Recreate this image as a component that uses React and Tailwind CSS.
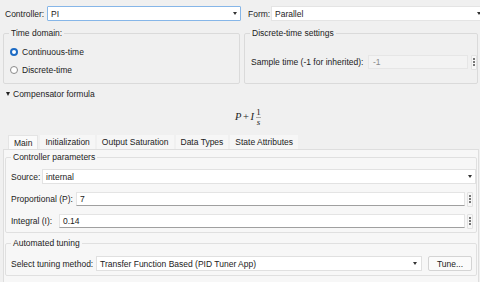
const Arrow = () => (
  <span className="inline-block w-0 h-0 border-l-[2.5px] border-r-[2.5px] border-t-[3px] border-l-transparent border-r-transparent border-t-[#333]" />
);

const Dots = () => (
  <div className="flex flex-col items-center justify-center gap-[1.5px] w-[6px] h-[15px] bg-[#f7f7f7] border border-[#e2e2e2] rounded-[1px] shrink-0">
    <span className="block w-[1.5px] h-[1.5px] bg-[#777]" />
    <span className="block w-[1.5px] h-[1.5px] bg-[#777]" />
    <span className="block w-[1.5px] h-[1.5px] bg-[#777]" />
  </div>
);

const Legend = ({ children }) => (
  <legend className="ml-[5px] px-[2px] leading-[10px] text-[#222]">{children}</legend>
);

const Tab = ({ children, active }) => (
  <div
    className={
      "h-[14px] px-[5px] flex items-center leading-[10px] " +
      (active ? "bg-[#fafafa] border-t border-l border-r border-[#e4e4e4]" : "bg-[#f6f6f6]")
    }
  >
    {children}
  </div>
);

export default function App() {
  return (
    <div className="w-[480px] h-[282px] overflow-hidden bg-[#f0f0f0] text-[#222] text-[8.5px] leading-[10px] font-['Liberation_Sans',Arial,sans-serif] flex flex-col">
      {/* Row 1 */}
      <div className="flex items-center mt-[6px] h-[15px]">
        <span className="ml-[5px] w-[42px]">Controller:</span>
        <div className="w-[194px] h-[15px] bg-white border border-[#86b6e8] rounded-[1px] flex items-center pl-[3px] pr-[3px]">
          <span className="flex-1">PI</span>
          <Arrow />
        </div>
        <span className="ml-[7px] w-[23px]">Form:</span>
        <div className="flex-1 h-[15px] bg-white border border-[#e4e4e4] flex items-center pl-[3px] mr-[-2px]">
          <span className="flex-1">Parallel</span>
          <Arrow />
        </div>
      </div>

      {/* Groups */}
      <div className="flex mt-[7px] pl-[3px] pr-[2px] gap-[4px] h-[56px]">
        <fieldset className="w-[237px] h-[56px] border border-[#dadada] rounded-[2px]">
          <Legend>Time domain:</Legend>
          <div className="flex flex-col mt-[8px] gap-[6px] pl-[6px]">
            <div className="flex items-center h-[12px]">
              <span className="w-[8px] h-[8px] rounded-full border-[2px] border-[#1d6bc4] bg-white" />
              <span className="ml-[4px]">Continuous-time</span>
            </div>
            <div className="flex items-center h-[12px]">
              <span className="w-[8px] h-[8px] rounded-full border border-[#8a8a8a] bg-white" />
              <span className="ml-[4px]">Discrete-time</span>
            </div>
          </div>
        </fieldset>
        <fieldset className="flex-1 h-[56px] border border-[#dadada] rounded-[2px]">
          <Legend>Discrete-time settings</Legend>
          <div className="flex items-center mt-[17px] pl-[6px] h-[14px]">
            <span className="w-[117px]">Sample time (-1 for inherited):</span>
            <div className="w-[100px] h-[14px] bg-[#f3f3f3] border border-[#e6e6e6] flex items-center pl-[4px] text-[#8a8a8a]">
              -1
            </div>
            <div className="ml-[3px]">
              <Dots />
            </div>
          </div>
        </fieldset>
      </div>

      {/* Compensator formula */}
      <div className="flex items-center mt-[5px] h-[10px] pl-[6px]">
        <span className="inline-block w-0 h-0 border-l-[2.5px] border-r-[2.5px] border-t-[4px] border-l-transparent border-r-transparent border-t-[#222]" />
        <span className="ml-[3px]">Compensator formula</span>
      </div>

      {/* Formula */}
      <div className="h-[36px] flex items-center justify-center pl-[16px] font-['Liberation_Serif',serif] italic text-[10.5px] text-[#222]">
        <span>P</span>
        <span className="not-italic mx-[1.5px]">+</span>
        <span>I</span>
        <span className="inline-flex flex-col items-center ml-[2px] text-[9px]">
          <span className="not-italic leading-[10px]">1</span>
          <span className="w-[5px] h-[0.5px] bg-[#aaa]" />
          <span className="leading-[10px]">s</span>
        </span>
      </div>

      {/* Tabs */}
      <div className="flex pl-[8px] gap-[2px] h-[14px]">
        <Tab active>Main</Tab>
        <Tab>Initialization</Tab>
        <Tab>Output Saturation</Tab>
        <Tab>Data Types</Tab>
        <Tab>State Attributes</Tab>
      </div>

      {/* Panel */}
      <div className="flex-1 ml-[3px] mr-[1px] border-t border-l border-r border-[#dedede] bg-[#f7f7f7] flex flex-col">
        <fieldset className="mx-[1px] mt-[2px] h-[81px] border border-[#e0e0e0] rounded-[2px]">
          <Legend>Controller parameters</Legend>
          <div className="flex items-center mt-[7px] h-[15px] pl-[5px]">
            <span className="w-[31px]">Source:</span>
            <div className="flex-1 h-[15px] bg-white border border-[#e2e2e2] flex items-center pl-[3px] pr-[3px]">
              <span className="flex-1">internal</span>
              <Arrow />
            </div>
          </div>
          <div className="flex items-center mt-[8px] h-[14px] pl-[5px] pr-[3px]">
            <span className="w-[65px]">Proportional (P):</span>
            <div className="flex-1 h-[14px] bg-white border border-[#e4e4e4] border-b-[#a0a0a0] flex items-center pl-[3px]">
              7
            </div>
            <div className="ml-[2px]">
              <Dots />
            </div>
          </div>
          <div className="flex items-center mt-[8px] h-[14px] pl-[5px] pr-[3px]">
            <span className="w-[48px]">Integral (I):</span>
            <div className="flex-1 h-[14px] bg-white border border-[#e4e4e4] border-b-[#a0a0a0] flex items-center pl-[3px]">
              0.14
            </div>
            <div className="ml-[2px]">
              <Dots />
            </div>
          </div>
        </fieldset>

        <fieldset className="mx-[1px] mt-[5px] h-[38px] border border-[#e0e0e0] rounded-[2px]">
          <Legend>Automated tuning</Legend>
          <div className="flex items-center mt-[8px] h-[15px] pl-[5px]">
            <span className="w-[85px]">Select tuning method:</span>
            <div className="w-[326px] h-[15px] bg-white border border-[#e0e0e0] flex items-center pl-[3px] pr-[4px]">
              <span className="flex-1">Transfer Function Based (PID Tuner App)</span>
              <Arrow />
            </div>
            <div className="ml-[6px] w-[44px] h-[15px] bg-[#fbfbfb] border border-[#d4d4d4] rounded-[2px] flex items-center justify-center">
              Tune...
            </div>
          </div>
        </fieldset>
      </div>
    </div>
  );
}
